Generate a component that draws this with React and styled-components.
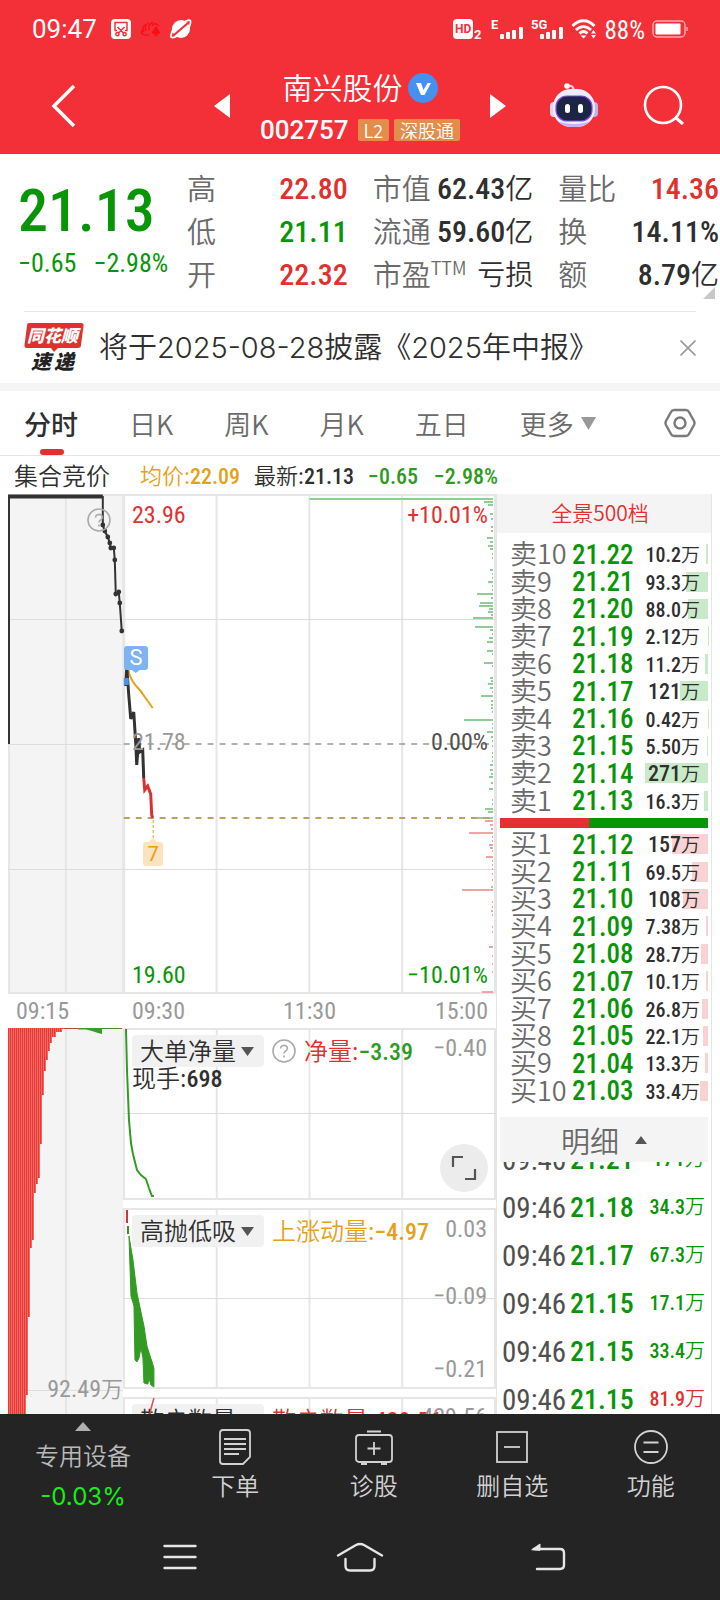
import React from "react";
import styled, { createGlobalStyle } from "styled-components";

const RED = "#e0312f";
const GREEN = "#089608";
const INK = "#2f2f2f";
const GREY = "#6a6a6a";
const LIGHT = "#999";
const AMBER = "#e5a11b";
const GRID = "#e6e6e6";

const GlobalStyle = createGlobalStyle`
  * {
    box-sizing: border-box;
  }
  body {
    margin: 0;
    background: #fff;
    color: ${INK};
    font-family: "Noto Sans CJK SC", "Noto Sans", sans-serif;
    font-weight: 350;
  }
  button, select {
    padding: 0;
    border: 0;
    background: none;
    color: inherit;
    font: inherit;
  }
  a {
    color: inherit;
    text-decoration: none;
  }
  svg {
    display: block;
    flex: none;
  }
`;

const Num = styled.span`
  font-family: "Roboto Condensed", Roboto, sans-serif;
  font-weight: ${(p) => p.$weight || 500};
  font-size: ${(p) => (p.$size ? `${p.$size}px` : "inherit")};
  color: ${(p) => p.$color || "inherit"};
`;

/* ---------- header ---------- */

const Header = styled.header`
  background: #f33038;
  color: #fff;
`;

const StatusBar = styled.div`
  display: flex;
  align-items: center;
  justify-content: space-between;
  height: 58px;
  padding: 0 32px;
`;

const StatusGroup = styled.div`
  display: flex;
  align-items: center;
  gap: ${(p) => p.$gap}px;
`;

const Clock = styled.span`
  font-family: Roboto, sans-serif;
  font-weight: 400;
  font-size: 26px;
`;

const Percent = styled.span`
  padding-top: 4px;
  font-family: "Roboto Condensed", sans-serif;
  font-weight: 400;
  font-size: 25px;
  line-height: 24px;
`;

const TitleBar = styled.div`
  display: grid;
  grid-template-columns: 1fr 220px 1fr;
  height: 96px;
`;

const TitleSide = styled.div`
  display: flex;
  align-items: center;
  justify-content: space-between;
  padding: ${(p) => (p.$right ? "0 34px 0 20px" : "0 20px 0 40px")};
`;

const Title = styled.div`
  display: flex;
  flex-direction: column;
  justify-content: flex-end;
  padding-bottom: 3px;
`;

const TitleRow = styled.div`
  display: flex;
  align-items: center;
  justify-content: center;
  height: 42px;
  gap: 5px;
`;

const Name = styled.h1`
  margin: 0;
  padding-bottom: 4px;
  font-size: 30px;
  font-weight: 350;
  white-space: nowrap;
`;

const Code = styled.span`
  margin-right: 4px;
  font-family: Roboto, sans-serif;
  font-size: 26px;
  font-weight: 500;
`;

const Tag = styled.span`
  padding: 0 6px;
  border-radius: 2px;
  background: #e38d4c;
  font-size: 18px;
  line-height: 22px;
  white-space: nowrap;
`;

/* ---------- quote ---------- */

const Quote = styled.section`
  position: relative;
  display: grid;
  grid-template-columns: 144px repeat(3, 1fr);
  column-gap: 25px;
  padding: 11px 1px 0 18px;
  height: 157px;
`;

const PriceBlock = styled.div`
  display: flex;
  flex-direction: column;
  padding-top: 6px;
  color: ${GREEN};
  white-space: nowrap;
`;

const Price = styled(Num)`
  font-size: 60px;
  line-height: 80px;
`;

const Change = styled(Num)`
  display: flex;
  gap: 17px;
  font-size: 26px;
  line-height: 24px;
`;

const Stats = styled.dl`
  margin: 0;
`;

const Stat = styled.div`
  display: flex;
  justify-content: space-between;
  align-items: center;
  height: 43px;
  white-space: nowrap;
  dt {
    display: flex;
    font-size: 29px;
    color: ${GREY};
  }
  dt small {
    font-size: 18px;
    line-height: 30px;
  }
  dd {
    margin: 0;
    font-size: 28px;
    color: ${(p) => p.$color || INK};
  }
`;

const Corner = styled.svg`
  position: absolute;
  right: 5px;
  bottom: 12px;
`;

/* ---------- notice ---------- */

const Notice = styled.section`
  display: flex;
  align-items: center;
  height: 72px;
  margin: 0 24px;
  border-top: 1px solid #e8e8e8;
  a {
    display: flex;
    align-items: center;
    gap: 15px;
    flex: 1;
    font-family: Inter, "Noto Sans CJK SC", sans-serif;
    font-size: 29px;
    line-height: 36px;
    white-space: nowrap;
  }
`;

/* ---------- tabs ---------- */

const Tabs = styled.nav`
  display: flex;
  gap: 51px;
  height: 73px;
  padding: 8px 24px 0;
  border-top: 8px solid #f4f4f4;
  border-bottom: 1px solid #e3e3e3;
`;

const Tab = styled.button`
  position: relative;
  display: flex;
  align-items: center;
  gap: 7px;
  height: 52px;
  padding-bottom: 4px;
  font-size: 27px;
  font-weight: ${(p) => (p.$active ? 500 : 350)};
  color: ${(p) => (p.$active ? INK : GREY)};
  white-space: nowrap;
  &::after {
    content: "";
    display: ${(p) => (p.$active ? "block" : "none")};
    position: absolute;
    left: 16px;
    bottom: -4px;
    width: 24px;
    height: 6px;
    border-radius: 3px;
    background: ${RED};
  }
`;

const Settings = styled.button`
  margin-left: auto;
  height: 48px;
`;

const InfoRow = styled.div`
  display: flex;
  align-items: center;
  height: 38px;
  padding: 0 0 2px 14px;
  white-space: nowrap;
`;

const InfoItem = styled.span`
  margin-right: ${(p) => p.$gap}px;
  font-size: ${(p) => p.$size || 22}px;
  color: ${(p) => p.$color || INK};
`;

/* ---------- chart column ---------- */

const Body = styled.main`
  display: grid;
  grid-template-columns: minmax(0, 1fr) 216px;
  padding: 0 8px;
  height: 920px;
  overflow: hidden;
`;

const PriceChart = styled.div`
  position: relative;
  height: 500px;
  svg.plot {
    width: 100%;
    height: 100%;
  }
`;

const AxisLabel = styled(Num)`
  position: absolute;
  font-weight: 400;
  font-size: 24px;
  line-height: 28px;
  ${(p) => p.$left !== undefined && `left: ${p.$left}px;`}
  ${(p) => p.$right !== undefined && `right: ${p.$right}px;`}
  ${(p) => p.$top !== undefined && `top: ${p.$top}px;`}
  ${(p) => p.$bottom !== undefined && `bottom: ${p.$bottom}px;`}
`;

const HelpSpot = styled.button`
  position: absolute;
  left: 79px;
  top: 14px;
`;

const Marker = styled.span`
  position: absolute;
  left: ${(p) => p.$left}px;
  top: ${(p) => p.$top}px;
  width: ${(p) => p.$width}px;
  line-height: 24px;
  text-align: center;
  border-radius: 3px;
  font-family: Roboto, sans-serif;
  font-weight: 400;
  font-size: ${(p) => p.$size}px;
  color: ${(p) => p.$color};
  background: ${(p) => p.$bg};
`;

const TimeAxis = styled.div`
  display: grid;
  grid-template-columns: 115px 1fr 1fr 1fr;
  align-items: center;
  height: 34px;
  font-size: 24px;
  color: ${LIGHT};
  span:nth-child(1) {
    padding-left: 8px;
  }
  span:nth-child(2) {
    padding-left: 9px;
  }
  span:nth-child(3) {
    text-align: center;
  }
  span:nth-child(4) {
    padding-right: 8px;
    text-align: right;
  }
`;

const Lower = styled.div`
  display: grid;
  grid-template-columns: 115px 1fr;
`;

const Volume = styled.div`
  position: relative;
  height: 386px;
  background: #f4f4f4;
`;

const VolumeLabel = styled.span`
  position: absolute;
  right: 0;
  top: 343px;
  font-size: 22px;
  line-height: 32px;
  color: ${LIGHT};
`;

const Indicators = styled.div`
  display: flex;
  flex-direction: column;
  gap: 8px;
  min-width: 0;
`;

const Indicator = styled.section`
  position: relative;
  height: ${(p) => p.$height}px;
  overflow: hidden;
  > svg {
    position: absolute;
    left: 0;
    top: 0;
    width: 100%;
    height: ${(p) => p.$plot}px;
  }
`;

const Legend = styled.div`
  position: relative;
  display: flex;
  align-items: center;
  gap: 8px;
  padding: 7px 0 0 9px;
  font-size: 24px;
  line-height: 30px;
  white-space: nowrap;
`;

const Sub = styled.div`
  position: relative;
  padding-left: 9px;
  font-size: 24px;
  line-height: 20px;
`;

const Picker = styled.label`
  display: flex;
  align-items: center;
  width: 132px;
  height: 32px;
  border-radius: 4px;
  background: #f1f1f1;
  select {
    width: 109px;
    padding: 0 0 2px 8px;
    appearance: none;
    line-height: 30px;
    outline: none;
  }
`;

const Expand = styled.button`
  position: absolute;
  right: 8px;
  bottom: 8px;
  display: grid;
  place-items: center;
  width: 48px;
  height: 48px;
  border-radius: 50%;
  background: #ececec;
`;

/* ---------- order book ---------- */

const Book = styled.aside`
  display: flex;
  flex-direction: column;
  height: 920px;
  border-left: 1px solid ${GRID};
  border-right: 1px solid ${GRID};
`;

const Panorama = styled.a`
  height: 39px;
  margin-bottom: 8px;
  padding-right: 8px;
  background: #f4f4f4;
  text-align: center;
  font-size: 21px;
  line-height: 36px;
  && {
    color: ${RED};
  }
`;

const Levels = styled.table`
  display: block;
  flex: none;
  margin: 0 3px 0 13px;
  tbody {
    display: grid;
    grid-template-rows: repeat(10, minmax(0, 1fr));
    height: 274px;
  }
  tr {
    display: grid;
    grid-template-columns: 62px 66px 1fr;
    align-items: center;
  }
  th, td {
    display: flex;
    align-items: center;
    padding: 0;
    white-space: nowrap;
    line-height: 24px;
  }
  th {
    padding-bottom: 3px;
    font-size: 27px;
    font-weight: 350;
    color: ${GREY};
  }
`;

const Amount = styled.td`
  position: relative;
  justify-content: flex-end;
  font-size: 19px;
  && {
    padding-right: 8px;
  }
  span {
    position: relative;
  }
`;

const Depth = styled.i`
  position: absolute;
  right: 0;
  top: 2px;
  height: 20px;
  background: ${(p) => (p.$sell ? "#c9eac9" : "#f9d3d4")};
`;

const Ratio = styled.div`
  display: flex;
  flex: none;
  height: 10px;
  margin: 3px 3px;
  background: ${GREEN};
  i {
    width: 43%;
    background: #e6302f;
  }
`;

const Detail = styled.button`
  display: flex;
  flex: none;
  align-items: center;
  justify-content: center;
  gap: 16px;
  height: 45px;
  margin: 12px 3px 0;
  background: #f4f4f4;
  font-size: 29px;
  color: ${GREY};
`;

const TickWindow = styled.div`
  flex: 1;
  min-height: 0;
  overflow: hidden;
`;

const Ticks = styled.table`
  width: 203px;
  margin: -28px 0 0 5px;
  border-collapse: collapse;
  table-layout: fixed;
  td {
    height: 48px;
    padding: 0;
    font-size: 28px;
    line-height: 30px;
    white-space: nowrap;
  }
  td:nth-child(1) {
    width: 68px;
    font-size: 29px;
    color: #505050;
  }
  td:nth-child(2) {
    width: 67px;
  }
  td:nth-child(3) {
    font-size: 20px;
    text-align: right;
  }
`;

/* ---------- footer ---------- */

const Footer = styled.footer`
  background: #242424;
  color: #d2d2d2;
`;

const Toolbar = styled.div`
  display: grid;
  grid-template-columns: 166px repeat(4, 1fr);
  height: 100px;
  font-size: 24px;
`;

const Tool = styled.button`
  display: flex;
  flex-direction: column;
  align-items: center;
  gap: 4px;
  padding-top: 14px;
  line-height: 30px;
`;

const Sector = styled.button`
  display: flex;
  flex-direction: column;
  align-items: center;
  gap: 6px;
  padding-top: 8px;
  line-height: 36px;
  color: #b9b9b9;
`;

const SectorChange = styled.span`
  font-family: Inter, sans-serif;
  font-weight: 400;
  color: #19ee19;
`;

const SystemNav = styled.nav`
  display: grid;
  grid-template-columns: repeat(3, 180px);
  justify-content: center;
  height: 86px;
  button {
    display: grid;
    place-items: center;
  }
`;

/* ---------- data ---------- */

const stats = [
  [
    { label: "高", num: "22.80", color: RED },
    { label: "低", num: "21.11", color: GREEN },
    { label: "开", num: "22.32", color: RED },
  ],
  [
    { label: "市值", num: "62.43", unit: "亿" },
    { label: "流通", num: "59.60", unit: "亿" },
    { label: "市盈", sup: "TTM", unit: "亏损" },
  ],
  [
    { label: "量比", num: "14.36", color: RED },
    { label: "换", num: "14.11%" },
    { label: "额", num: "8.79", unit: "亿" },
  ],
];

const sells = [
  ["卖10", "21.22", "10.2"],
  ["卖9", "21.21", "93.3"],
  ["卖8", "21.20", "88.0"],
  ["卖7", "21.19", "2.12"],
  ["卖6", "21.18", "11.2"],
  ["卖5", "21.17", "121"],
  ["卖4", "21.16", "0.42"],
  ["卖3", "21.15", "5.50"],
  ["卖2", "21.14", "271"],
  ["卖1", "21.13", "16.3"],
];

const buys = [
  ["买1", "21.12", "157"],
  ["买2", "21.11", "69.5"],
  ["买3", "21.10", "108"],
  ["买4", "21.09", "7.38"],
  ["买5", "21.08", "28.7"],
  ["买6", "21.07", "10.1"],
  ["买7", "21.06", "26.8"],
  ["买8", "21.05", "22.1"],
  ["买9", "21.04", "13.3"],
  ["买10", "21.03", "33.4"],
];

const ticks = [
  ["09:46", "21.21", "171", GREEN],
  ["09:46", "21.18", "34.3", GREEN],
  ["09:46", "21.17", "67.3", GREEN],
  ["09:46", "21.15", "17.1", GREEN],
  ["09:46", "21.15", "33.4", GREEN],
  ["09:46", "21.15", "81.9", RED],
];

// [y, length] of the resting orders at the right edge of the price chart
const sellDepth = [
  [8, 9], [11, 5], [20, 3], [25, 2], [33, 2], [37, 2], [44, 6], [48, 3], [52, 5], [55, 3],
  [60, 1], [64, 1], [76, 3], [80, 1], [84, 1], [88, 5], [92, 1], [96, 1], [100, 16], [104, 2],
  [109, 13], [112, 14], [115, 4], [118, 5], [121, 2], [124, 20], [133, 18], [136, 3], [140, 1],
  [144, 4], [148, 6], [157, 6], [160, 1], [169, 9], [172, 1], [184, 3], [187, 2], [190, 5],
  [194, 3], [198, 1], [202, 12], [207, 2], [211, 2], [214, 2], [218, 1], [226, 29], [230, 1],
  [234, 1], [238, 6], [243, 2], [247, 1], [252, 1], [259, 1], [263, 1], [267, 1], [271, 3],
  [276, 3], [280, 2], [283, 4], [289, 2], [295, 4], [306, 1], [310, 1], [315, 8], [318, 5], [324, 19],
];
const buyDepth = [
  [327, 8], [331, 3], [335, 2], [339, 24], [343, 1], [347, 1], [351, 4], [354, 3], [357, 1],
  [363, 7], [367, 1], [371, 1], [375, 1], [380, 1], [386, 1], [393, 2], [396, 31], [408, 1],
  [413, 1], [417, 2], [421, 1], [433, 1], [438, 1], [453, 4], [462, 1], [470, 1], [478, 1], [498, 11],
];

const auctionDots = [
  [95, 31], [97, 37], [100, 43], [102, 49], [103, 54], [106, 54], [107, 66], [108, 100], [111, 98], [112, 109], [114, 137],
];

// lower edge of the auction volume bars, one point per kink
const volumeEdge = [
  [0, 386], [18, 386], [19, 367], [21, 289], [23, 220], [25, 212], [27, 204], [28, 165], [30, 156],
  [31, 150], [33, 116], [35, 110], [36, 67], [38, 43], [40, 32], [42, 23], [44, 15], [46, 9], [49, 4], [55, 1],
];

const volumeBars = [];
for (let x = 0; x < 56; x += 2) {
  const edge = volumeEdge.filter(([ex]) => ex <= x + 2);
  volumeBars.push([x, edge[edge.length - 1][1]]);
}

/* ---------- icons ---------- */

const HelpIcon = () => (
  <svg width="24" height="24" viewBox="0 0 24 24" fill="none" stroke="#aaa" strokeWidth="1.6">
    <circle cx="12" cy="12" r="11" />
    <path d="M8.6 9.6C8.6 5.4 15.4 5.4 15.4 9.4C15.4 12 12 11.8 12 14.6M12 16.6V18.4" />
  </svg>
);

const Caret = ({ up, width = 12, height = 8, color = "#555" }) => (
  <svg width={width} height={height} viewBox="0 0 12 8" preserveAspectRatio="none">
    <path d={up ? "M0 8L6 0L12 8Z" : "M0 0H12L6 8Z"} fill={color} />
  </svg>
);

const Arrow = ({ right }) => (
  <svg width="16" height="24" viewBox="0 0 16 24">
    <path d={right ? "M0 0L16 12L0 24Z" : "M16 0L0 12L16 24Z"} fill="#fff" />
  </svg>
);

const Signal = ({ label }) => (
  <svg width="33" height="24" viewBox="0 0 33 24" fill="#fff">
    <text x="0" y="12" fontFamily="Roboto" fontWeight="700" fontSize="13">{label}</text>
    <rect x="9" y="17" width="4" height="5" rx="1" />
    <rect x="15" y="15" width="4" height="7" rx="1" />
    <rect x="21" y="13" width="4" height="9" rx="1" />
    <rect x="28" y="10" width="4" height="12" rx="1" />
  </svg>
);

const StatusIcons = () => (
  <svg width="82" height="22" viewBox="0 0 82 22">
    <rect x="0" y="1" width="20" height="20" rx="4" fill="#fff" />
    <g fill="none" stroke="#f33038" strokeWidth="1.5">
      <path d="M6 12.5H4V4.5H16V12.5H14M6.5 9L13 15.5M13.5 9L7 15.5" />
      <circle cx="6.4" cy="16.2" r="1.6" />
      <circle cx="13.6" cy="16.2" r="1.6" />
    </g>
    <g fill="none" stroke="#fb0d12" strokeWidth="1.3">
      <path d="M38 17C32 18 29 15 31 12M33 14C30 10 33 7 35 7M35 13C33 9 35 6 38 5M38 12C37 8 39 5 42 4.500M41 8C42 5 46 5 48 8" />
    </g>
    <path d="M45 8L49 14Q49 16 46 16L47 18H43L44 16Q40 16 41 14Z" fill="#fb0d12" />
    <circle cx="70" cy="11" r="9" fill="#fff" />
    <path d="M63 17L77 5" stroke="#f33038" strokeWidth="2.2" fill="none" />
    <path d="M63 10C60 15 59 19 61 19.500Q63 20 66 18M74 3.500Q79 1 79.500 3Q80 6 77 11" stroke="#fff" strokeWidth="1.8" fill="none" />
  </svg>
);

const HdIcon = () => (
  <svg width="31" height="24" viewBox="0 0 31 24">
    <rect x="0" y="2" width="20" height="20" rx="4" fill="#fff" />
    <text x="2" y="16" fontFamily="Roboto" fontWeight="700" fontSize="12" fill="#f33038">HD</text>
    <text x="21" y="22" fontFamily="Roboto" fontWeight="700" fontSize="13" fill="#fff">2</text>
  </svg>
);

const WifiIcon = () => (
  <svg width="26" height="20" viewBox="0 0 26 20" fill="none" stroke="#fff" strokeWidth="2.8">
    <path d="M1.5 7C8 0 17 0 23.5 7M5 11C9.5 6.5 15.5 6.5 20 11M8.5 14.5C11 12 14 12 16.5 14.5" />
    <path d="M9.5 16.5H15.5L12.5 19.5Z" fill="#fff" stroke="none" />
    <path d="M20 14.5L22.5 11L25 14.5ZM20 16L22.5 19.5L25 16Z" fill="#fff" stroke="none" />
  </svg>
);

const BatteryIcon = () => (
  <svg width="36" height="18" viewBox="0 0 36 18">
    <rect x="1" y="1" width="32" height="16" rx="4" fill="none" stroke="#fff" strokeOpacity="0.6" strokeWidth="1.4" />
    <rect x="3.5" y="3.5" width="25" height="11" rx="1" fill="#fff" />
    <path d="M35 7V11" stroke="#fff" strokeOpacity="0.6" strokeWidth="1.4" />
  </svg>
);

const RobotIcon = () => (
  <svg width="48" height="46" viewBox="0 0 48 46">
    <path d="M17 3C22 2 24 4 24 9" fill="none" stroke="#e9c9dc" strokeWidth="2.2" />
    <circle cx="17" cy="3" r="2.8" fill="#fff" />
    <rect x="0" y="19" width="9" height="15" rx="4" fill="#dcd3fb" />
    <rect x="39" y="19" width="9" height="15" rx="4" fill="#b9b5f4" />
    <rect x="3" y="6" width="42" height="38" rx="18" fill="#efecfc" />
    <path d="M8 38C14 46 34 46 40 38C34 42 14 42 8 38Z" fill="#bfb6f2" />
    <rect x="6" y="13" width="36" height="25" rx="11" fill="#1c2644" stroke="#7b4ae6" strokeWidth="1.2" />
    <rect x="15" y="21" width="5" height="9" rx="2.5" fill="#fff" />
    <rect x="28" y="21" width="5" height="9" rx="2.5" fill="#fff" />
  </svg>
);

const NewsLogo = () => (
  <svg width="60" height="52" viewBox="0 0 60 52">
    <path d="M5 1H57Q60 1 59.5 4L57 23Q57 26 54 26H34L30 30L27 26H3Q0 26 0.5 23L3 4Q3 1 5 1Z" fill={RED} />
    <g fontFamily="Noto Sans CJK SC" fontWeight="900" fontStyle="italic">
      <text x="3" y="20" fontSize="17" fill="#fff">同花顺</text>
      <text x="7" y="47" fontSize="20" fill="#222">速</text>
      <text x="30" y="47" fontSize="20" fill="#222">递</text>
    </g>
  </svg>
);

/* ---------- parts ---------- */

const Level = ({ row: [name, price, amount], sell }) => (
  <tr>
    <th scope="row">{name}</th>
    <td>
      <Num $size={27} $color={GREEN}>{price}</Num>
    </td>
    <Amount>
      <Depth $sell={sell} style={{ width: `${amount / 4.3}px` }} />
      <span>
        <Num $size={amount.includes(".") ? 20 : 22}>{amount}</Num>万
      </span>
    </Amount>
  </tr>
);

const IndicatorPicker = ({ name }) => (
  <Picker>
    <select aria-label="指标" defaultValue={name}>
      <option>{name}</option>
    </select>
    <Caret width={13} height={9} />
  </Picker>
);

const GridLines = ({ height, mid }) => (
  <g stroke={GRID} strokeWidth="2">
    <path d={`M1 0V${height}M94 0V${height}M187 0V${height}M280 0V${height}M373 0V${height}M0 1H374M0 ${height - 1}H374`} />
    {mid && <path d={`M0 ${mid}.5H374`} stroke="#ddd" strokeWidth="1" />}
  </g>
);

const PricePlot = () => (
  <svg className="plot" viewBox="0 0 489 500" preserveAspectRatio="none" fill="none">
    <rect x="0" y="0" width="115" height="500" fill="#f4f4f4" />
    <path d="M58 0V500M209 0V500M302 0V500M395 0V500M488 0V500M0 1H489M0 499H489M1 0V500" stroke={GRID} strokeWidth="2" />
    <path d="M116 0V500" stroke={GRID} strokeWidth="3" />
    <path d="M0 125.5H489M0 250.5H115M0 375.5H489" stroke="#ddd" />
    <path d="M302 5H486" stroke="#8fd08f" strokeWidth="2" />
    <path d={sellDepth.map(([y, w]) => `M486 ${y}h-${w}`).join("")} stroke="#8fcc98" strokeWidth="2" />
    <path d={buyDepth.map(([y, w]) => `M486 ${y}h-${w}`).join("")} stroke="#f0a3a6" strokeWidth="2" />
    <path d="M116 250H482" stroke="#999" strokeWidth="1.5" strokeDasharray="6 6" />
    <path d="M116 324H482" stroke="#b9a468" strokeWidth="2" strokeDasharray="6 6" />
    <path d="M145.5 326V348" stroke={AMBER} strokeDasharray="3 2" />
    <path d="M0 2.5H95" stroke="#333" strokeWidth="4" />
    <path d="M1 2V250" stroke="#333" strokeWidth="2" />
    <path d={"M95 2L" + auctionDots.map((d) => d.join(" ")).join("L")} stroke="#333" strokeWidth="2" />
    {auctionDots.map(([x, y]) => (
      <circle key={`${x}-${y}`} cx={x} cy={y} r="2.4" fill="#333" />
    ))}
    <path d="M120 172C122 190 132 194 135 200L145 214" stroke={AMBER} strokeWidth="2" />
    <path
      d="M118 192L119 173L121 201L123 225L126 218L128 249L129 271L131 244L132 258L135 256L136 284"
      stroke="#333"
      strokeWidth="3"
    />
    <path d="M136 284L137 296L140 292L143 300L144 321L145 324" stroke="#dc3030" strokeWidth="3" />
    <rect x="116" y="184" width="5" height="7" fill="#4b93ea" />
    <path d="M124 176H132L128 179Z" fill="#7fb2f0" />
    <path d="M141 348L145 344L149 348Z" fill="#fbe3bd" />
  </svg>
);

const App = () => {
  return (
    <>
      <GlobalStyle />
      <Header>
        <StatusBar>
          <StatusGroup $gap={14}>
            <Clock>09:47</Clock>
            <StatusIcons />
          </StatusGroup>
          <StatusGroup $gap={7}>
            <HdIcon />
            <Signal label="E" />
            <Signal label="5G" />
            <WifiIcon />
            <Percent>88%</Percent>
            <BatteryIcon />
          </StatusGroup>
        </StatusBar>
        <TitleBar>
          <TitleSide>
            <button aria-label="返回">
              <svg width="46" height="44" viewBox="0 0 46 44" fill="none" stroke="#fff" strokeWidth="3.5">
                <path d="M34 2L14 22L34 42" />
              </svg>
            </button>
            <button aria-label="上一只">
              <Arrow />
            </button>
          </TitleSide>
          <Title>
            <TitleRow>
              <Name>南兴股份</Name>
              <svg width="30" height="30" viewBox="0 0 30 30">
                <circle cx="15" cy="15" r="15" fill="#4591f0" />
                <path d="M8 10H13L15.5 17L19.5 10H23L16.5 22H13Z" fill="#fff" />
              </svg>
            </TitleRow>
            <TitleRow>
              <Code>002757</Code>
              <Tag>L2</Tag>
              <Tag>深股通</Tag>
            </TitleRow>
          </Title>
          <TitleSide $right>
            <button aria-label="下一只">
              <Arrow right />
            </button>
            <button aria-label="助手">
              <RobotIcon />
            </button>
            <button aria-label="搜索">
              <svg width="44" height="44" viewBox="0 0 44 44" fill="none" stroke="#fff" strokeWidth="2.6">
                <circle cx="21" cy="21" r="18" />
                <path d="M33 33L41 40" strokeWidth="3" />
              </svg>
            </button>
          </TitleSide>
        </TitleBar>
      </Header>

      <Quote>
        <PriceBlock>
          <Price>21.13</Price>
          <Change $weight={400}>
            <span>−0.65</span>
            <span>−2.98%</span>
          </Change>
        </PriceBlock>
        {stats.map((col) => (
          <Stats key={col[0].label}>
            {col.map((s) => (
              <Stat key={s.label} $color={s.color}>
                <dt>
                  {s.label}
                  {s.sup && <small>{s.sup}</small>}
                </dt>
                <dd>
                  {s.num && <Num $size={30}>{s.num}</Num>}
                  {s.unit}
                </dd>
              </Stat>
            ))}
          </Stats>
        ))}
        <Corner width="12" height="12" viewBox="0 0 12 12">
          <path d="M12 0V12H0Z" fill="#c8c8c8" />
        </Corner>
      </Quote>

      <Notice>
        <a href="#notice">
          <NewsLogo />
          将于2025-08-28披露《2025年中报》
        </a>
        <button aria-label="关闭">
          <svg width="16" height="16" viewBox="0 0 16 16" stroke="#999" strokeWidth="1.6">
            <path d="M0.5 0.5L15.5 15.5M15.5 0.5L0.5 15.5" />
          </svg>
        </button>
      </Notice>

      <Tabs>
        <Tab $active>分时</Tab>
        <Tab>日K</Tab>
        <Tab>周K</Tab>
        <Tab>月K</Tab>
        <Tab>五日</Tab>
        <Tab>
          更多
          <Caret width={15} height={13} color="#999" />
        </Tab>
        <Settings aria-label="设置">
          <svg width="32" height="30" viewBox="0 0 32 30" fill="none" stroke="#7a7a7a" strokeWidth="2.4">
            <path d="M10 2H22Q24 2 25 4L30 13Q31 15 30 17L25 26Q24 28 22 28H10Q8 28 7 26L2 17Q1 15 2 13L7 4Q8 2 10 2Z" />
            <circle cx="16" cy="15" r="5.5" />
          </svg>
        </Settings>
      </Tabs>

      <InfoRow>
        <InfoItem $size={24} $gap={30}>集合竞价</InfoItem>
        <InfoItem $color={AMBER} $gap={14}>
          均价:<Num>22.09</Num>
        </InfoItem>
        <InfoItem $gap={14}>
          最新:<Num>21.13</Num>
        </InfoItem>
        <InfoItem $color="#2e9a1e" $gap={16}>
          <Num>−0.65</Num>
        </InfoItem>
        <InfoItem $color="#2e9a1e" $gap={0}>
          <Num>−2.98%</Num>
        </InfoItem>
      </InfoRow>

      <Body>
        <div>
          <PriceChart>
            <PricePlot />
            <HelpSpot aria-label="集合竞价说明">
              <HelpIcon />
            </HelpSpot>
            <Marker $left={116} $top={152} $width={24} $size={22} $color="#fff" $bg="#7fb2f0">S</Marker>
            <Marker $left={135} $top={348} $width={20} $size={20} $color="#eb9a1a" $bg="#fbe3bd">7</Marker>
            <AxisLabel $left={124} $top={7} $color={RED}>23.96</AxisLabel>
            <AxisLabel $right={8} $top={7} $color={RED}>+10.01%</AxisLabel>
            <AxisLabel $left={124} $top={234} $color={LIGHT}>21.78</AxisLabel>
            <AxisLabel $right={8} $top={234} $color="#505050">0.00%</AxisLabel>
            <AxisLabel $left={124} $bottom={5} $color={GREEN}>19.60</AxisLabel>
            <AxisLabel $right={8} $bottom={5} $color={GREEN}>−10.01%</AxisLabel>
          </PriceChart>
          <TimeAxis>
            <Num $weight={400}>09:15</Num>
            <Num $weight={400}>09:30</Num>
            <Num $weight={400}>11:30</Num>
            <Num $weight={400}>15:00</Num>
          </TimeAxis>
          <Lower>
            <Volume>
              <svg width="115" height="386" viewBox="0 0 115 386">
                <path d="M58 0V386" stroke={GRID} strokeWidth="2" />
                <path d="M0 362.5H115" stroke="#ddd" />
                {volumeBars.map(([x, h]) => (
                  <rect key={x} x={x} y="0" width="2" height={h} fill="#ec3835" />
                ))}
                {volumeBars.map(([x, h]) => (
                  <rect key={x} x={x + 1.5} y="0" width="0.5" height={h} fill="#f79a98" />
                ))}
                <path d="M56 0.5H114" stroke="#c04a3a" />
                <path d="M70 0H94V6L90 5L84 3L78 1.5H70Z" fill="#3a9c2c" />
                <path d="M94 0.5H112" stroke="#4a8c3c" />
              </svg>
              <VolumeLabel>
                <Num $size={24} $weight={400}>92.49</Num>万
              </VolumeLabel>
            </Volume>
            <Indicators>
              <Indicator $height={172} $plot={172}>
                <svg viewBox="0 0 374 172" preserveAspectRatio="none" fill="none">
                  <GridLines height={172} mid={85} />
                  <path
                    d="M3 1L4 42L6 92L8 115L10 126L14 142L18 147L23 151L26 160L29 168L31 168"
                    stroke="#339a24"
                    strokeWidth="2"
                  />
                </svg>
                <Legend>
                  <IndicatorPicker name="大单净量" />
                  <button aria-label="指标说明">
                    <HelpIcon />
                  </button>
                  <span>
                    <InfoItem $size={24} $color={RED} $gap={0}>净量:</InfoItem>
                    <Num $color="#2e9a1e">−3.39</Num>
                  </span>
                </Legend>
                <Sub>
                  现手:<Num>698</Num>
                </Sub>
                <AxisLabel $right={9} $top={6} $color={LIGHT}>−0.40</AxisLabel>
                <Expand aria-label="全屏">
                  <svg width="26" height="26" viewBox="0 0 26 26" fill="none" stroke="#555" strokeWidth="2.2">
                    <path d="M2 12V2H12M24 14V24H14" />
                  </svg>
                </Expand>
              </Indicator>
              <Indicator $height={181} $plot={181}>
                <svg viewBox="0 0 374 181" preserveAspectRatio="none" fill="none">
                  <GridLines height={181} mid={90} />
                  <path d="M4 2V15" stroke="#dc3030" strokeWidth="2" />
                  <path d="M5 18V26" stroke="#339a24" strokeWidth="2" />
                  <path
                    d="M6 28L8 40L10 52L14 85L18 104L21 118L24 138L31 160V179L28 177L26 170L25 176L21 175L20 150L18 140L16 150L14 154L12 152L11 98L8 88Z"
                    fill="#339a24"
                    stroke="#339a24"
                  />
                </svg>
                <Legend>
                  <IndicatorPicker name="高抛低吸" />
                  <InfoItem $size={24} $color={AMBER} $gap={0}>
                    上涨动量:<Num>−4.97</Num>
                  </InfoItem>
                </Legend>
                <AxisLabel $right={9} $top={7} $color={LIGHT}>0.03</AxisLabel>
                <AxisLabel $right={9} $top={74} $color={LIGHT}>−0.09</AxisLabel>
                <AxisLabel $right={9} $top={147} $color={LIGHT}>−0.21</AxisLabel>
              </Indicator>
              <Indicator $height={17} $plot={170}>
                <svg viewBox="0 0 374 170" preserveAspectRatio="none" fill="none">
                  <GridLines height={170} />
                </svg>
                <Legend>
                  <IndicatorPicker name="散户数量" />
                  <InfoItem $size={24} $color={RED} $gap={0}>
                    散户数量:<Num>429.56</Num>
                  </InfoItem>
                </Legend>
                <AxisLabel $right={9} $top={6} $color={LIGHT}>429.56</AxisLabel>
                <svg viewBox="0 0 374 170" preserveAspectRatio="none" fill="none">
                  <path d="M31 1L28 12L26 24" stroke="#dc5050" strokeWidth="1.5" />
                </svg>
              </Indicator>
            </Indicators>
          </Lower>
        </div>

        <Book>
          <Panorama href="#depth">全景500档</Panorama>
          <Levels>
            <tbody>
              {sells.map((row) => (
                <Level key={row[0]} row={row} sell />
              ))}
            </tbody>
          </Levels>
          <Ratio>
            <i />
          </Ratio>
          <Levels>
            <tbody>
              {buys.map((row) => (
                <Level key={row[0]} row={row} />
              ))}
            </tbody>
          </Levels>
          <Detail>
            明细
            <Caret up />
          </Detail>
          <TickWindow>
            <Ticks>
              <tbody>
                {ticks.map(([time, price, amount, color]) => (
                  <tr key={price + amount}>
                    <td>
                      <Num $weight={400}>{time}</Num>
                    </td>
                    <td>
                      <Num $color={GREEN}>{price}</Num>
                    </td>
                    <td style={{ color }}>
                      <Num $size={amount.includes(".") ? 20 : 22}>{amount}</Num>万
                    </td>
                  </tr>
                ))}
              </tbody>
            </Ticks>
          </TickWindow>
        </Book>
      </Body>

      <Footer>
        <Toolbar>
          <Sector>
            <Caret up width={16} height={9} color="#b0b0b0" />
            <span>专用设备</span>
            <SectorChange>-0.03%</SectorChange>
          </Sector>
          <Tool>
            <svg width="38" height="38" viewBox="0 0 38 38" fill="none" stroke="#d2d2d2" strokeWidth="1.8">
              <path d="M7 2H31Q34 2 34 5V29L27 36H7Q4 36 4 33V5Q4 2 7 2Z" />
              <path d="M8 11H30M8 16H30M8 21H30M8 26H23" />
            </svg>
            下单
          </Tool>
          <Tool>
            <svg width="38" height="38" viewBox="0 0 38 38" fill="none" stroke="#d2d2d2" strokeWidth="1.8">
              <path d="M12 3.5H26M19 14V27M12.5 20.5H25.5" />
              <rect x="1" y="7" width="36" height="27" rx="3" />
              <path d="M6 35.5H12M26 35.5H32" strokeWidth="3" />
            </svg>
            诊股
          </Tool>
          <Tool>
            <svg width="38" height="38" viewBox="0 0 38 38" fill="none" stroke="#d2d2d2" strokeWidth="1.8">
              <rect x="4" y="4" width="30" height="30" />
              <path d="M11 19H27" />
            </svg>
            删自选
          </Tool>
          <Tool>
            <svg width="38" height="38" viewBox="0 0 38 38" fill="none" stroke="#d2d2d2" strokeWidth="1.8">
              <circle cx="19" cy="19" r="16" />
              <path d="M11.5 14.5H26.5M11.5 24H26.5" />
            </svg>
            功能
          </Tool>
        </Toolbar>
        <SystemNav>
          <button aria-label="菜单">
            <svg width="34" height="26" viewBox="0 0 34 26" stroke="#e6e6e6" strokeWidth="2.4" strokeLinecap="round">
              <path d="M1.5 2H32.5M1.5 13H32.5M1.5 24H32.5" />
            </svg>
          </button>
          <button aria-label="主页">
            <svg width="48" height="30" viewBox="0 0 48 30" fill="none" stroke="#e6e6e6" strokeWidth="2.4" strokeLinecap="round">
              <path d="M2 13.5L20 3Q24 1 28 3L46 13.5M9.5 17V24Q9.5 28.5 14 28.5H34Q38.5 28.5 38.5 24V17" />
            </svg>
          </button>
          <button aria-label="后退">
            <svg width="52" height="28" viewBox="0 0 52 28" fill="none" stroke="#e6e6e6" strokeWidth="2.4" strokeLinecap="round">
              <path d="M20 6H46Q50 6 50 10V22Q50 26 46 26H23" />
              <path d="M18 6.5L26 1V7Z" fill="#e6e6e6" strokeWidth="1" />
            </svg>
          </button>
        </SystemNav>
      </Footer>
    </>
  );
};

export default App;
